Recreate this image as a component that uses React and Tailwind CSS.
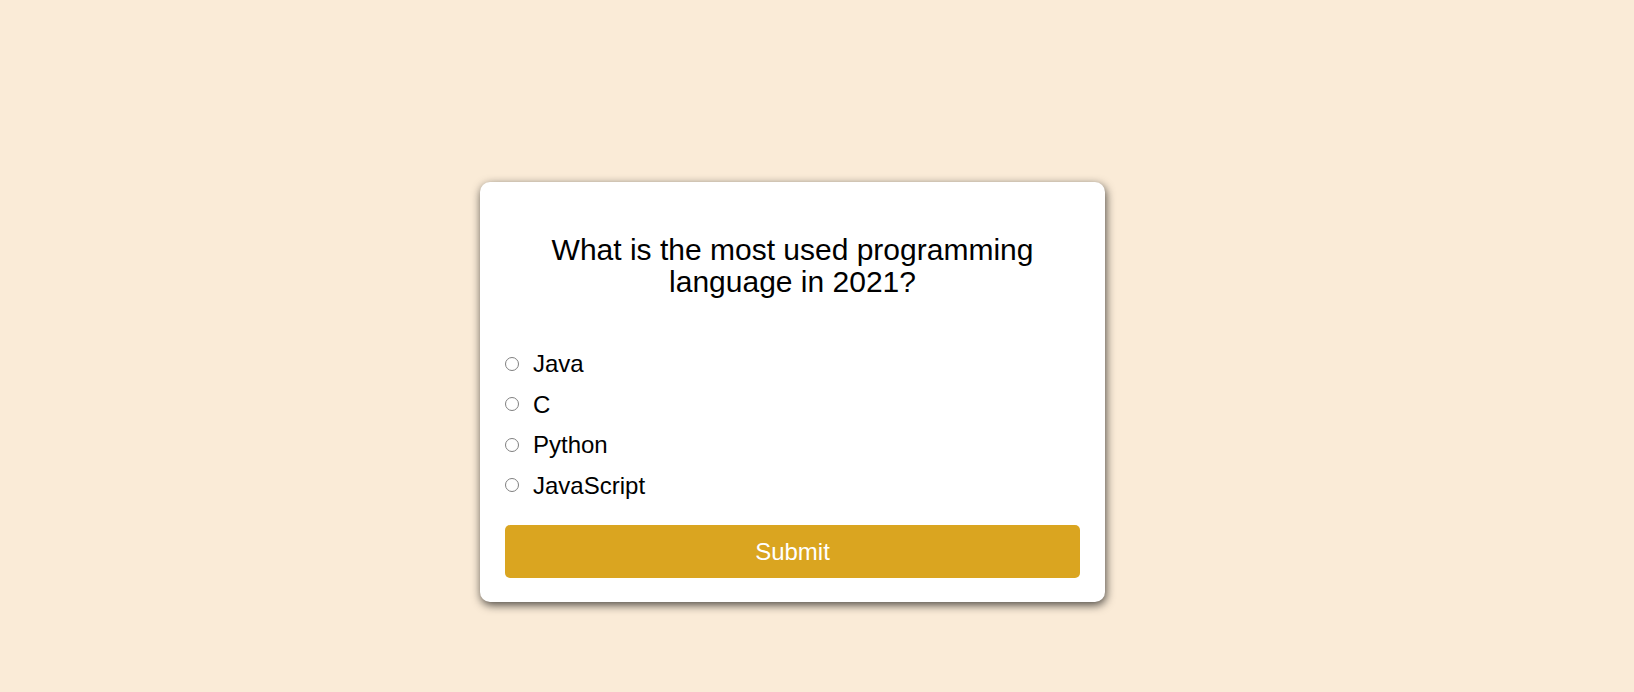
import React from "react";

export default function App() {
  const options = ["Java", "C", "Python", "JavaScript"];
  return (
    <div className="min-h-screen w-full bg-[#faebd7] pt-[182px] pl-[480px] font-['Liberation_Sans',Arial,sans-serif] text-black">
      <div className="w-[625px] bg-white rounded-[10px] shadow-[1px_3px_10px_rgba(0,0,0,0.7)] px-[25px] pt-[52px] pb-[24px] flex flex-col">
        <h2 className="text-[30px] leading-[32px] text-center px-[20px]">
          What is the most used programming language in 2021?
        </h2>
        <ul className="mt-[52px] flex flex-col gap-[13px]">
          {options.map((o, i) => (
            <li key={o} className="flex items-start text-[24px] leading-[27.6px]">
              <input
                type="radio"
                name="answer"
                id={"a" + i}
                className="appearance-none m-0 mt-[6.5px] w-[14px] h-[14px] shrink-0 rounded-full border border-[#808080] bg-white"
              />
              <label htmlFor={"a" + i} className="ml-[14px]">
                {o}
              </label>
            </li>
          ))}
        </ul>
        <button className="mt-[26px] h-[53px] w-full bg-[#daa520] rounded-[5px] text-white text-[24px]">
          Submit
        </button>
      </div>
    </div>
  );
}
